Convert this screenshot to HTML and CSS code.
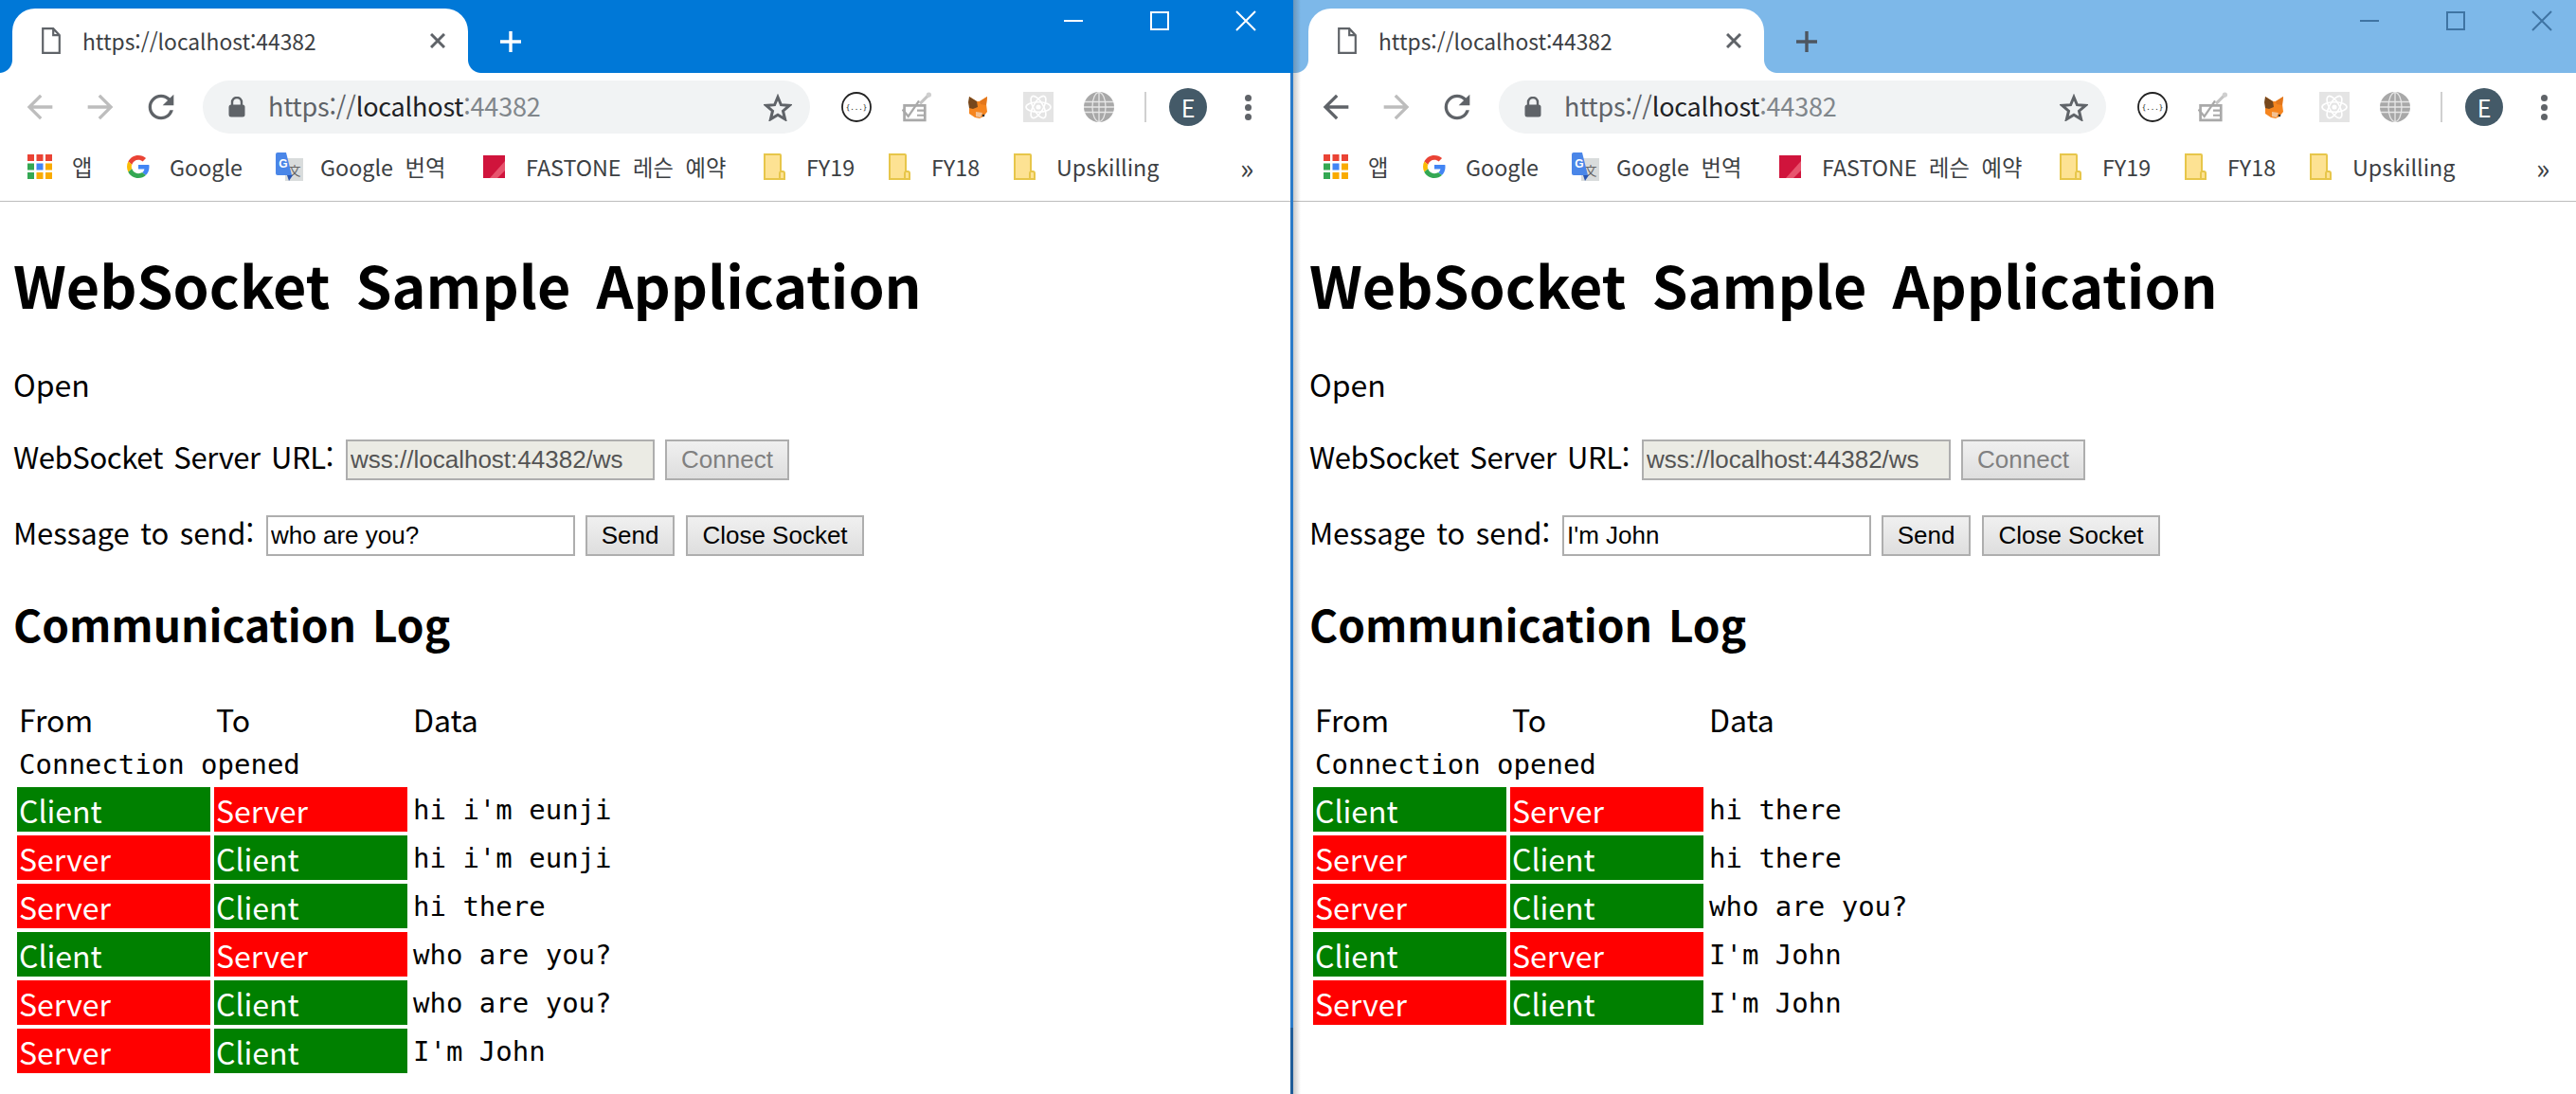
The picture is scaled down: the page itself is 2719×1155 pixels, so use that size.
FILE: index.html
```html
<!DOCTYPE html>
<html lang="ko">
<head>
<meta charset="utf-8">
<title>WebSocket Sample Application</title>
<link rel="stylesheet" href="styles.css">
</head>
<body>
<svg class="defs" aria-hidden="true">
  <symbol id="doc" viewBox="0 0 20 28"><path d="M1.2 1.2h11l6.6 7v18.6H1.2z M12.2 1.2v7h6.6" fill="none" stroke="#5f6368" stroke-width="2.2"/></symbol>
  <symbol id="x" viewBox="0 0 16 16"><path d="M1 1l14 14M15 1L1 15" fill="none" stroke="#5f6368" stroke-width="3"/></symbol>
  <symbol id="back" viewBox="0 0 24 24"><path d="M20 11H7.83l5.59-5.59L12 4l-8 8 8 8 1.41-1.41L7.83 13H20v-2z"/></symbol>
  <symbol id="fwd" viewBox="0 0 24 24"><path d="M4 11h12.17l-5.59-5.59L12 4l8 8-8 8-1.41-1.41L16.17 13H4v-2z"/></symbol>
  <symbol id="reload" viewBox="0 0 24 24"><path d="M17.65 6.35A7.958 7.958 0 0 0 12 4c-4.42 0-7.99 3.58-7.99 8s3.57 8 7.99 8c3.73 0 6.84-2.55 7.73-6h-2.08A5.99 5.99 0 0 1 12 18c-3.31 0-6-2.69-6-6s2.69-6 6-6c1.66 0 3.14.69 4.22 1.78L13 11h7V4l-2.35 2.35z" fill="#5f6368"/></symbol>
  <symbol id="lock" viewBox="0 0 18 22"><path d="M4 9V6a5 5 0 0 1 10 0v3" fill="none" stroke="#5f6368" stroke-width="2.4"/><rect x="0.5" y="8.5" width="17" height="13" rx="2.5" fill="#5f6368"/></symbol>
  <symbol id="star" viewBox="0 0 30 29"><path d="M15 3.5l3.4 8.2 8.8.7-6.7 5.8 2.1 8.6-7.6-4.600-7.6 4.600 2.100-8.600-6.700-5.800 8.800-.7z" fill="none" stroke="#5f6368" stroke-width="3"/></symbol>
  <symbol id="json" viewBox="0 0 32 32"><circle cx="16" cy="16" r="15" fill="#fff" stroke="#222" stroke-width="1.8"/><text x="16" y="19" text-anchor="middle" font-family="DejaVu Sans Mono, monospace" font-size="7.5" fill="#222">{...}</text></symbol>
  <symbol id="check" viewBox="0 0 30 31"><path d="M2 14h21v15H2z" fill="none" stroke="#a9a9a9" stroke-width="2.6"/><path d="M0 18l6 7 11-16" fill="none" stroke="#a9a9a9" stroke-width="2.2"/><path d="M15 19h7M15 24h7" stroke="#a9a9a9" stroke-width="2"/><path d="M18 12l9-9" stroke="#c4c4c4" stroke-width="3"/><circle cx="27" cy="3" r="2.600" fill="#cfcfcf"/></symbol>
  <symbol id="fox" viewBox="0 0 22 25"><path d="M2 1l8 5h3l8-5-1 8 1 8-4 5-4 2-5-1-6-4 0-9z" fill="#f5851f"/><path d="M2 1l8 5 1 6-5 2-4-1-1-6z" fill="#76471c"/><path d="M21 1l-8 5 1 3 6 1z" fill="#e2761b"/><path d="M9 17l7 1-2 5-5-1z" fill="#f2c194"/><circle cx="17" cy="21" r="1.300" fill="#333"/></symbol>
  <symbol id="react" viewBox="0 0 32 32"><rect width="32" height="32" fill="#e4e4e4"/><g fill="none" stroke="#fff" stroke-width="1.6"><ellipse cx="16" cy="16" rx="13" ry="5.200"/><ellipse cx="16" cy="16" rx="13" ry="5.200" transform="rotate(60 16 16)"/><ellipse cx="16" cy="16" rx="13" ry="5.200" transform="rotate(120 16 16)"/></g><circle cx="16" cy="16" r="2.600" fill="#fff"/></symbol>
  <symbol id="globe" viewBox="0 0 32 32"><circle cx="16" cy="16" r="16" fill="#a8a8a8"/><g fill="none" stroke="#e6e6e6" stroke-width="1.3"><ellipse cx="16" cy="16" rx="7" ry="15.500"/><path d="M16 0v32M1 10.500h30M0 16h32M1 21.500h30"/></g></symbol>
  <symbol id="apps" viewBox="0 0 26 26"><rect width="7" height="7" fill="#ea4335"/><rect x="9.5" width="7" height="7" fill="#ea4335"/><rect x="19" width="7" height="7" fill="#ea4335"/><rect y="9.5" width="7" height="7" fill="#34a853"/><rect x="9.5" y="9.5" width="7" height="7" fill="#4285f4"/><rect x="19" y="9.5" width="7" height="7" fill="#f9ab00"/><rect y="19" width="7" height="7" fill="#34a853"/><rect x="9.5" y="19" width="7" height="7" fill="#f9ab00"/><rect x="19" y="19" width="7" height="7" fill="#f9ab00"/></symbol>
  <symbol id="g" viewBox="0 0 48 48"><path fill="#ea4335" d="M24 9.500c3.500 0 6.700 1.200 9.200 3.600l6.900-6.900C35.900 2.400 30.500 0 24 0 14.600 0 6.500 5.400 2.600 13.200l8 6.200C12.400 13.700 17.700 9.500 24 9.500z"/><path fill="#4285f4" d="M47 24.500c0-1.600-.1-3.100-.4-4.500H24v9h12.900c-.6 3-2.200 5.500-4.800 7.200l7.700 6C44.400 37.900 47 31.800 47 24.500z"/><path fill="#fbbc05" d="M10.600 28.600A14.500 14.500 0 0 1 9.500 24c0-1.600.3-3.200 1.100-4.600l-8-6.200A24 24 0 0 0 0 24c0 3.900.9 7.500 2.600 10.800z"/><path fill="#34a853" d="M24 48c6.500 0 11.900-2.100 15.800-5.800l-7.700-6c-2.100 1.400-4.900 2.300-8.100 2.300-6.300 0-11.600-4.200-13.400-9.900l-8 6.200C6.500 42.600 14.600 48 24 48z"/></symbol>
  <symbol id="translate" viewBox="0 0 29 30"><rect x="10" y="6" width="19" height="24" fill="#d9dcdc"/><text x="20" y="24" text-anchor="middle" font-family="Noto Sans CJK SC, sans-serif" font-size="13" fill="#666">文</text><path d="M0 2a2 2 0 0 1 2-2h9l6 24H2a2 2 0 0 1-2-2z" fill="#4a86e8"/><path d="M12 24h6l-4 6z" fill="#2a56b0"/><text x="8" y="16" text-anchor="middle" font-family="Liberation Sans, sans-serif" font-size="12" font-weight="700" fill="#fff">G</text></symbol>
  <symbol id="fastone" viewBox="0 0 23 24"><rect width="23" height="24" fill="#d0143c"/><path d="M23 6v10l-8 8H7z" fill="#e8546e"/></symbol>
  <symbol id="folder" viewBox="0 0 23 28"><path d="M1 1h16a1 1 0 0 1 1 1v25H1z" fill="#fde293" stroke="#e7c64a" stroke-width="2"/><path d="M18 19h2a2 2 0 0 1 2 2v6H17v-6a2 2 0 0 1 1-2z" fill="#fde293" stroke="#e7c64a" stroke-width="2"/></symbol>
</svg>
<div class="desk">
  <section class="win win-left">
    <header class="strip">
      <div class="tab"><svg class="ic-doc"><use href="#doc"/></svg><span class="tab-title">https://localhost:44382</span><svg class="ic-x"><use href="#x"/></svg></div>
      <svg class="plus" viewBox="0 0 24 24"><path d="M12 1v22M1 12h22"/></svg>
      <div class="controls"><svg viewBox="0 0 20 20"><path d="M0 10h20"/></svg><svg viewBox="0 0 20 20"><path d="M1 1h18v18H1z"/></svg><svg viewBox="0 0 20 20"><path d="M0 0l20 20M20 0L0 20"/></svg></div>
    </header>
    <nav class="toolbar">
      <span class="slot off"><svg class="nav-ic"><use href="#back"/></svg></span>
      <span class="slot off"><svg class="nav-ic"><use href="#fwd"/></svg></span>
      <span class="slot"><svg class="nav-ic"><use href="#reload"/></svg></span>
      <div class="omni"><svg class="ic-lock"><use href="#lock"/></svg><span class="url"><span class="u-s">https://</span><span class="u-h">localhost</span><span class="u-p">:44382</span></span><svg class="ic-star"><use href="#star"/></svg></div>
      <span class="slot ext first"><svg class="ext-ic"><use href="#json"/></svg></span>
      <span class="slot ext"><svg class="ext-ic"><use href="#check"/></svg></span>
      <span class="slot ext"><svg class="ext-fox"><use href="#fox"/></svg></span>
      <span class="slot ext"><svg class="ext-ic"><use href="#react"/></svg></span>
      <span class="slot ext"><svg class="ext-ic"><use href="#globe"/></svg></span>
      <span class="sep"></span>
      <span class="avatar">E</span>
      <span class="dots"><i></i><i></i><i></i></span>
    </nav>
    <div class="bookmarks">
      <span class="bm w-apps"><svg class="i-apps"><use href="#apps"/></svg>앱</span>
      <span class="bm w-google"><svg class="i-g"><use href="#g"/></svg>Google</span>
      <span class="bm w-trans"><svg class="i-trans"><use href="#translate"/></svg>Google 번역</span>
      <span class="bm w-fast"><svg class="i-fast"><use href="#fastone"/></svg>FASTONE 레슨 예약</span>
      <span class="bm w-fy"><svg class="i-folder"><use href="#folder"/></svg>FY19</span>
      <span class="bm w-fy"><svg class="i-folder"><use href="#folder"/></svg>FY18</span>
      <span class="bm w-up"><svg class="i-folder"><use href="#folder"/></svg>Upskilling</span>
      <span class="more">»</span>
    </div>
    <main class="page">
      <h1>WebSocket Sample Application</h1>
      <p class="state">Open</p>
      <div class="row row-url"><label>WebSocket Server URL:</label><input class="field" value="wss://localhost:44382/ws" disabled><button class="btn btn-connect" disabled>Connect</button></div>
      <div class="row row-msg"><label>Message to send:</label><input class="field" value="who are you?"><button class="btn btn-send">Send</button><button class="btn btn-close">Close Socket</button></div>
      <h2>Communication Log</h2>
      <table class="log">
        <thead><tr><td>From</td><td>To</td><td>Data</td></tr></thead>
        <tbody>
          <tr class="open"><td colspan="3" class="mono">Connection opened</td></tr>
          <tr><td class="g">Client</td><td class="r">Server</td><td class="mono">hi i'm eunji</td></tr>
          <tr><td class="r">Server</td><td class="g">Client</td><td class="mono">hi i'm eunji</td></tr>
          <tr><td class="r">Server</td><td class="g">Client</td><td class="mono">hi there</td></tr>
          <tr><td class="g">Client</td><td class="r">Server</td><td class="mono">who are you?</td></tr>
          <tr><td class="r">Server</td><td class="g">Client</td><td class="mono">who are you?</td></tr>
          <tr><td class="r">Server</td><td class="g">Client</td><td class="mono">I'm John</td></tr>
        </tbody>
      </table>
    </main>
  </section>
  <div class="divider"></div>
  <section class="win win-right">
    <header class="strip">
      <div class="tab"><svg class="ic-doc"><use href="#doc"/></svg><span class="tab-title">https://localhost:44382</span><svg class="ic-x"><use href="#x"/></svg></div>
      <svg class="plus" viewBox="0 0 24 24"><path d="M12 1v22M1 12h22"/></svg>
      <div class="controls"><svg viewBox="0 0 20 20"><path d="M0 10h20"/></svg><svg viewBox="0 0 20 20"><path d="M1 1h18v18H1z"/></svg><svg viewBox="0 0 20 20"><path d="M0 0l20 20M20 0L0 20"/></svg></div>
    </header>
    <nav class="toolbar">
      <span class="slot"><svg class="nav-ic dark"><use href="#back"/></svg></span>
      <span class="slot off"><svg class="nav-ic"><use href="#fwd"/></svg></span>
      <span class="slot"><svg class="nav-ic"><use href="#reload"/></svg></span>
      <div class="omni"><svg class="ic-lock"><use href="#lock"/></svg><span class="url"><span class="u-s">https://</span><span class="u-h">localhost</span><span class="u-p">:44382</span></span><svg class="ic-star"><use href="#star"/></svg></div>
      <span class="slot ext first"><svg class="ext-ic"><use href="#json"/></svg></span>
      <span class="slot ext"><svg class="ext-ic"><use href="#check"/></svg></span>
      <span class="slot ext"><svg class="ext-fox"><use href="#fox"/></svg></span>
      <span class="slot ext"><svg class="ext-ic"><use href="#react"/></svg></span>
      <span class="slot ext"><svg class="ext-ic"><use href="#globe"/></svg></span>
      <span class="sep"></span>
      <span class="avatar">E</span>
      <span class="dots"><i></i><i></i><i></i></span>
    </nav>
    <div class="bookmarks">
      <span class="bm w-apps"><svg class="i-apps"><use href="#apps"/></svg>앱</span>
      <span class="bm w-google"><svg class="i-g"><use href="#g"/></svg>Google</span>
      <span class="bm w-trans"><svg class="i-trans"><use href="#translate"/></svg>Google 번역</span>
      <span class="bm w-fast"><svg class="i-fast"><use href="#fastone"/></svg>FASTONE 레슨 예약</span>
      <span class="bm w-fy"><svg class="i-folder"><use href="#folder"/></svg>FY19</span>
      <span class="bm w-fy"><svg class="i-folder"><use href="#folder"/></svg>FY18</span>
      <span class="bm w-up"><svg class="i-folder"><use href="#folder"/></svg>Upskilling</span>
      <span class="more">»</span>
    </div>
    <main class="page">
      <h1>WebSocket Sample Application</h1>
      <p class="state">Open</p>
      <div class="row row-url"><label>WebSocket Server URL:</label><input class="field" value="wss://localhost:44382/ws" disabled><button class="btn btn-connect" disabled>Connect</button></div>
      <div class="row row-msg"><label>Message to send:</label><input class="field" value="I'm John"><button class="btn btn-send">Send</button><button class="btn btn-close">Close Socket</button></div>
      <h2>Communication Log</h2>
      <table class="log">
        <thead><tr><td>From</td><td>To</td><td>Data</td></tr></thead>
        <tbody>
          <tr class="open"><td colspan="3" class="mono">Connection opened</td></tr>
          <tr><td class="g">Client</td><td class="r">Server</td><td class="mono">hi there</td></tr>
          <tr><td class="r">Server</td><td class="g">Client</td><td class="mono">hi there</td></tr>
          <tr><td class="r">Server</td><td class="g">Client</td><td class="mono">who are you?</td></tr>
          <tr><td class="g">Client</td><td class="r">Server</td><td class="mono">I'm John</td></tr>
          <tr><td class="r">Server</td><td class="g">Client</td><td class="mono">I'm John</td></tr>
        </tbody>
      </table>
    </main>
  </section>
</div>
</body>
</html>
```
FILE: styles.css
```css
* { box-sizing: border-box; }
html, body { margin: 0; height: 100%; overflow: hidden; background: #fff; }
body { font-family: "Noto Sans CJK KR", "Noto Sans", sans-serif; color: #000; }
.defs { display: none; }
.desk { display: flex; width: 2719px; height: 1155px; }
.win { height: 1155px; overflow: hidden; position: relative; }
.win-left { flex: 0 0 1362px; --title: #0078d7; --ctl: #fff; --plus: #fff; }
.win-right { flex: 0 0 1354px; padding-left: 0; --title: #7db8e9; --ctl: #3f74a3; --plus: #4d5660; }
.win-right > * { padding-left: 3px; }
.win-right::before { content: ""; position: absolute; left: 0; top: 0; bottom: 0; width: 8px; background: linear-gradient(to right, rgba(60,60,60,.28), rgba(60,60,60,0)); z-index: 2; }
.divider { flex: 0 0 3px; height: 1155px; background: linear-gradient(to bottom, #0078d7 0, #0078d7 77px, #2a7bc9 77px, #2a7bc9 1085px, #1f5c97 1085px); }

/* tab strip */
.strip { display: flex; height: 77px; background: var(--title); align-items: flex-start; }
.win-left .strip { padding-left: 13px; }
.win-right .strip { padding-left: 16px; }
.tab { position: relative; margin-top: 9px; width: 481px; height: 68px; background: #fff; border-radius: 24px 24px 0 0; display: flex; align-items: center; padding: 0 24px 0 31px; }
.tab::before, .tab::after { content: ""; position: absolute; bottom: 0; width: 14px; height: 14px; }
.tab::before { left: -14px; background: radial-gradient(circle at 0 0, transparent 13.5px, #fff 14.5px); }
.tab::after { right: -14px; background: radial-gradient(circle at 100% 0, transparent 13.5px, #fff 14.5px); }
.ic-doc { width: 20px; height: 28px; flex: none; }
.tab-title { flex: 1; margin-left: 23px; font-size: 22.8px; color: #3c4043; white-space: nowrap; }
.ic-x { width: 16px; height: 16px; flex: none; }
.plus { width: 24px; height: 24px; margin: 32px 0 0 33px; fill: none; stroke: var(--plus); stroke-width: 3.4; flex: none; }
.controls { display: flex; gap: 71px; margin: 12px 0 0 572px; }
.controls svg { width: 20px; height: 20px; fill: none; stroke: var(--ctl); stroke-width: 2; overflow: visible; }

/* toolbar */
.toolbar { display: flex; align-items: center; height: 72px; background: #fff; }
.win-left .toolbar { padding-left: 10px; }
.win-right .toolbar { padding-left: 13px; }
.slot { width: 64px; height: 44px; display: flex; align-items: center; justify-content: center; flex: none; }
.nav-ic { width: 40px; height: 40px; fill: #5f6368; }
.off .nav-ic { fill: #bdbdbd; }
.omni { margin-left: 12px; width: 641px; height: 56px; border-radius: 28px; background: #f1f3f4; display: flex; align-items: center; padding-left: 27px; flex: none; }
.ic-lock { width: 18px; height: 22px; flex: none; }
.url { margin-left: 24px; font-size: 27px; letter-spacing: -.2px; padding-bottom: 3px; white-space: nowrap; flex: 1; }
.u-s { color: #5f6368; }
.u-h { color: #202124; }
.u-p { color: #80868b; }
.ic-star { width: 30px; height: 29px; margin-right: 19px; flex: none; }
.ext.first { margin-left: 17px; }
.ext-ic { width: 32px; height: 32px; }
.ext-fox { width: 22px; height: 25px; }
.sep { width: 2px; height: 32px; background: #d0d0d0; margin-left: 16px; flex: none; }
.avatar { width: 40px; height: 40px; border-radius: 50%; background: #445a68; color: #fff; font-size: 25px; display: flex; align-items: center; justify-content: center; margin-left: 24px; flex: none; }
.dots { display: flex; flex-direction: column; gap: 3px; margin-left: 40px; flex: none; }
.dots i { width: 7px; height: 7px; border-radius: 50%; background: #5f6368; display: block; }

/* bookmarks */
.bookmarks { display: flex; align-items: center; height: 64px; padding-bottom: 10px; background: #fff; border-bottom: 1px solid #bdbdbd; font-size: 23.3px; word-spacing: 6px; color: #3c4043; white-space: nowrap; }
.win-left .bookmarks { padding-left: 29px; }
.win-right .bookmarks { padding-left: 32px; }
.bm { display: flex; align-items: center; flex: none; }
.w-apps { width: 105px; }
.w-google { width: 157px; }
.w-trans { width: 219px; }
.w-fast { width: 296px; }
.w-fy { width: 132px; }
.w-up { width: 239px; }
.i-apps { width: 26px; height: 26px; margin-right: 21px; }
.i-g { width: 24px; height: 24px; margin-right: 21px; }
.i-trans { width: 29px; height: 30px; margin-right: 18px; }
.i-fast { width: 23px; height: 24px; margin-right: 22px; }
.i-folder { width: 23px; height: 28px; margin-right: 22px; }
.more { font-size: 30px; line-height: 1; }

/* page */
.page { background: #fff; padding-left: 14px; height: 942px; }
.win-right .page { padding-left: 17px; }
h1 { margin: 47px 0 0; font-size: 61px; line-height: 80px; font-weight: 700; word-spacing: 10px; white-space: nowrap; }
.state { margin: 43px 0 0; font-size: 32px; line-height: 44px; }
.row { display: flex; align-items: center; height: 43px; font-size: 31px; }
.row-url { margin-top: 37px; }
.row-msg { margin-top: 37px; }
.row label { flex: none; margin-right: 11px; padding-bottom: 8px; word-spacing: 3px; white-space: nowrap; }
.row-url label { width: 340px; letter-spacing: -.4px; }
.row-msg label { width: 256px; letter-spacing: -.05px; }
.field { width: 326px; height: 43px; border: 2px solid #aeaeae; padding: 0 3px; font: 26px "Liberation Sans", sans-serif; color: #000; background: #fff; border-radius: 0; margin: 0; outline: none; }
.field:disabled { background: #ebebe4; color: #545454; }
.btn { height: 43px; margin: 0 0 0 11px; padding: 0; border: 2px solid #aeaeae; border-radius: 0; background: linear-gradient(to bottom, #f0f0f0, #dedede); font: 26px "Liberation Sans", sans-serif; color: #000; }
.btn:disabled { color: #808080; }
.btn-connect { width: 131px; }
.btn-send { width: 94px; }
.btn-close { width: 188px; margin-left: 12px; }
h2 { margin: 45px 0 0; font-size: 46px; line-height: 52px; font-weight: 700; word-spacing: 4px; white-space: nowrap; }
.log { border-collapse: separate; border-spacing: 4px; margin-top: 48px; font-size: 32px; table-layout: fixed; }
.log td { padding: 0 2px; white-space: nowrap; }
.log td:nth-child(1), .log td:nth-child(2) { width: 204px; }
.log thead tr { height: 42px; }
.log tbody tr { height: 47px; }
.log .open { height: 41px; }
.g { background: #008000; color: #fff; }
.r { background: #ff0000; color: #fff; }
.mono { font-family: "DejaVu Sans Mono", monospace; font-size: 29px; }
```
